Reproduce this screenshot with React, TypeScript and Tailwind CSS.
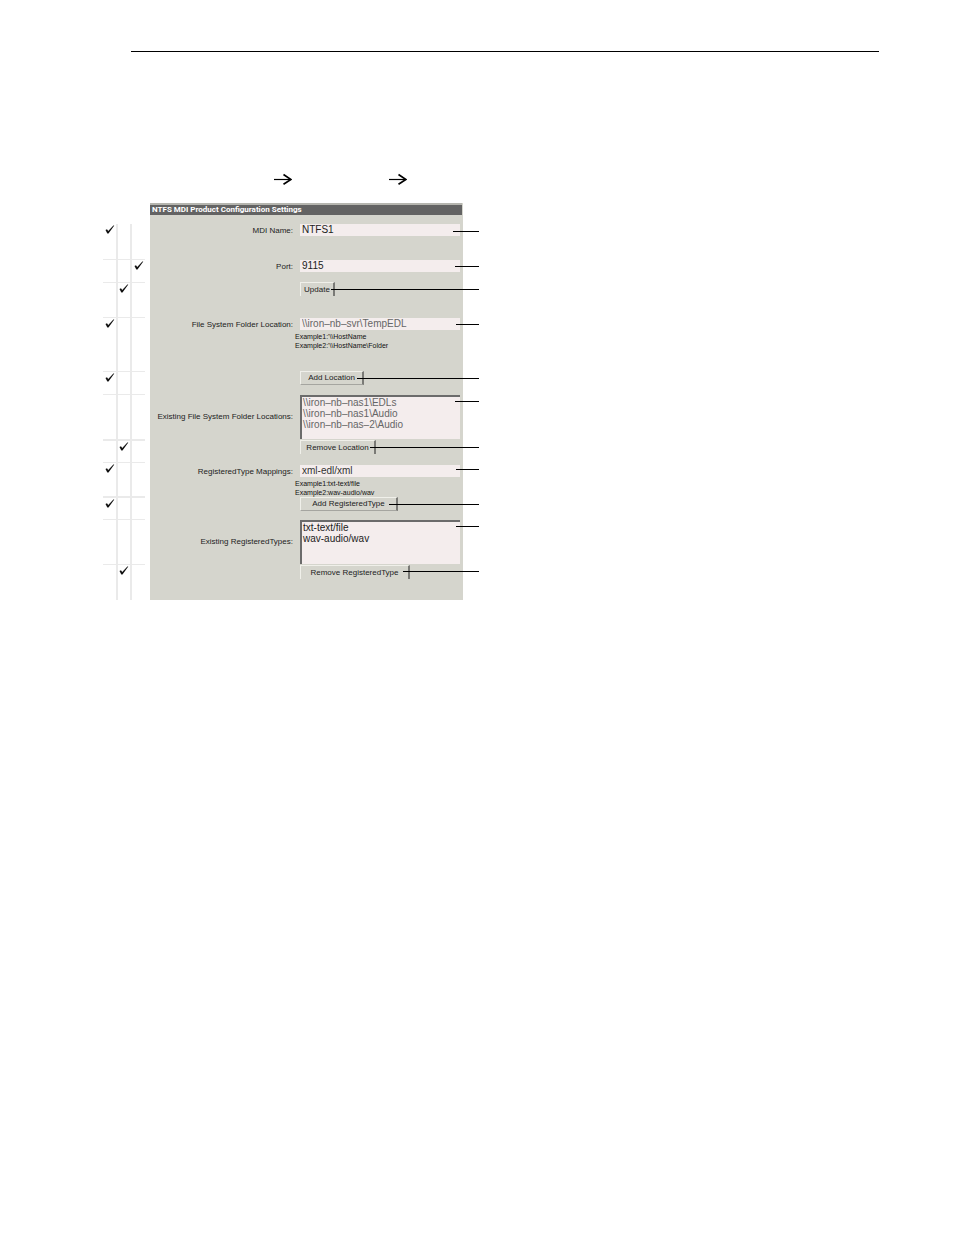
import type { ReactNode } from "react";

const checks = [
  { col: 0, height: "h-[35px]", border: "border-t-0" },
  { col: 2, height: "h-[23px]", border: "border-t" },
  { col: 1, height: "h-[35px]", border: "border-t" },
  { col: 0, height: "h-[54px]", border: "border-t" },
  { col: 0, height: "h-[23px]", border: "border-t" },
  { col: -1, height: "h-[45px]", border: "border-t" },
  { col: 1, height: "h-[23px]", border: "border-t-2" },
  { col: 0, height: "h-[34px]", border: "border-t" },
  { col: 0, height: "h-[23px]", border: "border-t-2" },
  { col: -1, height: "h-[45px]", border: "border-t" },
  { col: 1, height: "h-[36px]", border: "border-t" },
];

const locations = ["\\\\iron–nb–nas1\\EDLs", "\\\\iron–nb–nas1\\Audio", "\\\\iron–nb–nas–2\\Audio"];
const registeredTypes = ["txt-text/file", "wav-audio/wav"];

const inputClass = "block h-3 w-40 bg-[#f4eded] px-[2px] text-[10px] leading-3 outline-none";
const buttonClass =
  "block h-[14px] border-t border-l border-r-2 border-t-[#f0f0ea] border-l-[#f0f0ea] border-r-[#7a7a76] text-center text-[8px] leading-3 whitespace-nowrap text-[#222]";
const raisedClass = "border-b border-b-[#a5a5a0]";
const listClass =
  "block h-11 w-40 appearance-none overflow-hidden border-t-2 border-l-2 border-[#6b6b6b] bg-[#f4eded] text-[10px] outline-none";

function Arrow() {
  return (
    <svg width="18" height="12" viewBox="0 0 18 12" fill="none" stroke="black" aria-hidden="true">
      <path d="M0 6.5H17" strokeWidth="1.2" />
      <path d="M9.5 1.5L17 6.5L9.5 11.3" strokeWidth="1.7" />
    </svg>
  );
}

function CheckMark() {
  return (
    <svg width="10" height="9" viewBox="0 0 10 9" fill="#111" aria-hidden="true">
      <path d="M0.5 5L2 4.2L3.2 6.1L8.4 0.4L9.3 0.6L3.5 8.6L2.3 8.6Z" />
    </svg>
  );
}

type RowProps = {
  height: string;
  callout: string;
  label?: string;
  htmlFor?: string;
  labelClass?: string;
  children: ReactNode;
};

function Row({ height, callout, label, htmlFor, labelClass = "pt-px", children }: RowProps) {
  return (
    <div className={`relative flex ${height}`}>
      <div className={`flex-1 pr-[7px] text-right text-[8px] leading-3 text-[#222] ${labelClass}`}>
        {label && <label htmlFor={htmlFor}>{label}</label>}
      </div>
      <div className="w-[163px]">{children}</div>
      <span className={`absolute -right-4 h-px bg-black ${callout}`} />
    </div>
  );
}

function Examples({ lines }: { lines: string[] }) {
  return (
    <div className="-ml-[5px] pt-[2px] text-[7px] leading-[9px] text-[#111]">
      {lines.map((line) => (
        <p key={line}>{line}</p>
      ))}
    </div>
  );
}

export default function App() {
  return (
    <main className="min-h-screen bg-white pt-[51px] font-['Liberation_Sans',Arial,sans-serif]">
      <hr className="mr-[75px] ml-[131px] border-t border-black" />

      <div className="flex gap-[97px] pt-[121px] pl-[274px]">
        <Arrow />
        <Arrow />
      </div>

      <div className="flex items-end gap-[5px] pt-[18px] pl-[103px]">
        {/* Check columns */}
        <div className="w-[42px] shrink-0">
          {checks.map((row, i) => (
            <div
              key={i}
              className={`grid grid-cols-[15px_14px_13px] border-[#eaeaea] ${row.height} ${row.border}`}
            >
              {[0, 1, 2].map((col) => (
                <div
                  key={col}
                  className={`flex justify-center border-[#eaeaea] pt-px ${col < 2 ? "border-r-2" : ""}`}
                >
                  {row.col === col && <CheckMark />}
                </div>
              ))}
            </div>
          ))}
        </div>

        <form className="w-full max-w-[313px] bg-[#d5d5cd]" onSubmit={(e) => e.preventDefault()}>
          <h1 className="mr-px mb-[9px] border-t-2 border-[#b5b5af] bg-[#636363] pl-[2px] font-[Roboto,sans-serif] text-[8px] leading-[10px] font-bold text-white">
            NTFS MDI Product Configuration Settings
          </h1>

          <Row height="h-9" callout="top-[7px] w-[26px]" label="MDI Name:" htmlFor="mdi-name">
            <input id="mdi-name" className={`${inputClass} text-[#222]`} defaultValue="NTFS1" />
          </Row>
          <Row height="h-[22px]" callout="top-[6px] w-6" label="Port:" htmlFor="port">
            <input id="port" className={`${inputClass} text-[#222]`} defaultValue="9115" />
          </Row>
          <Row height="h-9" callout="top-[7px] w-[148px]">
            <button className={`${buttonClass} w-[35px]`}>Update</button>
          </Row>
          <Row
            height="h-[53px]"
            callout="top-[6px] w-[23px]"
            label="File System Folder Location:"
            htmlFor="folder"
          >
            <input id="folder" className={`${inputClass} text-[#666]`} defaultValue={"\\\\iron–nb–svr\\TempEDL"} />
            <Examples lines={["Example1:'\\\\HostName", "Example2:'\\\\HostName\\Folder"]} />
          </Row>
          <Row height="h-6" callout="top-[7px] w-[122px]">
            <button className={`${buttonClass} ${raisedClass} w-16`}>Add Location</button>
          </Row>
          <Row
            height="h-[45px]"
            callout="top-[6px] w-6"
            label="Existing File System Folder Locations:"
            htmlFor="folders"
            labelClass="pt-4"
          >
            <select id="folders" multiple className={`${listClass} text-[#666]`}>
              {locations.map((item) => (
                <option key={item} className="h-[11px] min-h-0 p-0 pl-px leading-[11px]">
                  {item}
                </option>
              ))}
            </select>
          </Row>
          <Row height="h-[25px]" callout="top-[7px] w-[109px]">
            <button className={`${buttonClass} w-[76px]`}>Remove Location</button>
          </Row>
          <Row
            height="h-8"
            callout="top-1 w-[23px]"
            label="RegisteredType Mappings:"
            htmlFor="mapping"
          >
            <input id="mapping" className={`${inputClass} text-[#333]`} defaultValue="xml-edl/xml" />
            <Examples lines={["Example1:txt-text/file", "Example2:wav-audio/wav"]} />
          </Row>
          <Row height="h-[23px]" callout="top-[7px] w-[90px]">
            <button className={`${buttonClass} ${raisedClass} w-[98px]`}>Add RegisteredType</button>
          </Row>
          <Row
            height="h-[45px]"
            callout="top-[6px] w-[23px]"
            label="Existing RegisteredTypes:"
            htmlFor="types"
            labelClass="pt-4"
          >
            <select id="types" multiple className={`${listClass} text-[#222]`}>
              {registeredTypes.map((item) => (
                <option key={item} className="h-[11px] min-h-0 p-0 pl-px leading-[11px]">
                  {item}
                </option>
              ))}
            </select>
          </Row>
          <Row height="h-[35px]" callout="top-[6px] w-[76px]">
            <button className={`${buttonClass} w-[110px]`}>Remove RegisteredType</button>
          </Row>
        </form>
      </div>
    </main>
  );
}
